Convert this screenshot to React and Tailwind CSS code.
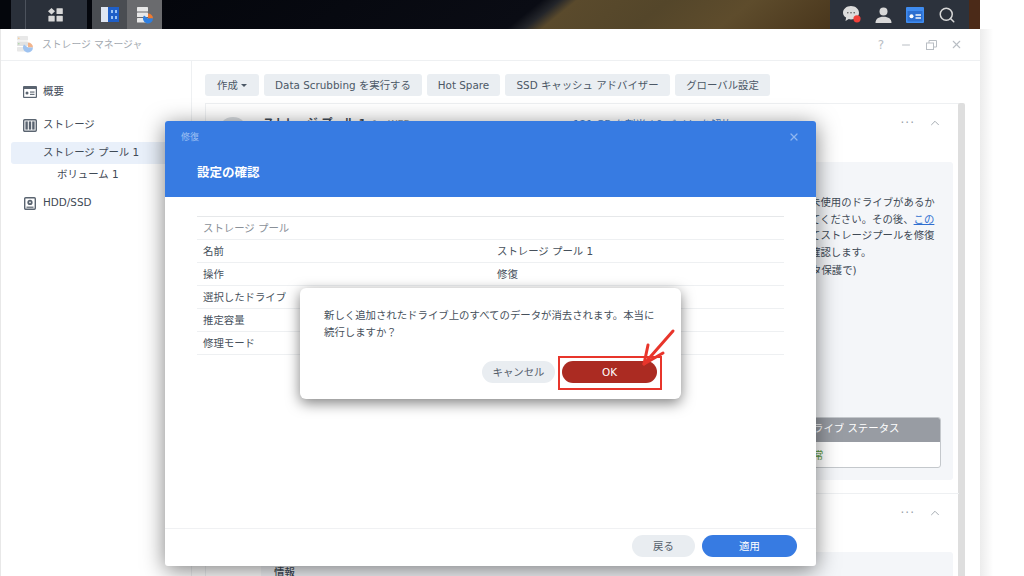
import React from 'react'
import { X, Minus, ChevronUp, Search } from 'lucide-react'

const FONT = { fontFamily: '"DejaVu Sans", "Noto Sans CJK JP", sans-serif' }

const CONFIRM_ROWS = [
  { label: 'ストレージ プール', value: '', head: true },
  { label: '名前', value: 'ストレージ プール 1' },
  { label: '操作', value: '修復' },
  { label: '選択したドライブ', value: '' },
  { label: '推定容量', value: '' },
  { label: '修理モード', value: '' },
]

function OverviewIcon() {
  return (
    <svg width="14" height="12" viewBox="0 0 14 12">
      <rect width="14" height="12" rx="1" fill="#5a6470" />
      <rect x="1.2" y="3" width="11.6" height="7.8" fill="#fff" />
      <circle cx="4" cy="7" r="1.5" fill="#5a6470" />
      <rect x="7" y="5.5" width="4.5" height="1.1" fill="#5a6470" />
      <rect x="7" y="7.8" width="4.5" height="1.1" fill="#5a6470" />
    </svg>
  )
}

function StorageIcon() {
  return (
    <svg width="14" height="13" viewBox="0 0 14 13">
      <rect x="0.7" y="0.7" width="12.6" height="11.6" rx="1" fill="#fff" stroke="#5a6470" strokeWidth="1.4" />
      <rect x="2.4" y="2.4" width="2.4" height="8.2" fill="#5a6470" />
      <rect x="5.8" y="2.4" width="2.4" height="8.2" fill="#5a6470" />
      <rect x="9.2" y="2.4" width="2.4" height="8.2" fill="#5a6470" />
    </svg>
  )
}

function HddIcon() {
  return (
    <svg width="12" height="13" viewBox="0 0 12 13">
      <rect x="0.7" y="0.7" width="10.6" height="11.6" rx="1" fill="#fff" stroke="#5a6470" strokeWidth="1.4" />
      <circle cx="6" cy="5.4" r="2.6" fill="#5a6470" />
      <circle cx="6" cy="5.4" r="0.8" fill="#fff" />
      <rect x="2.5" y="9.6" width="7" height="1.2" fill="#5a6470" />
    </svg>
  )
}

function StorageAppIcon() {
  return (
    <svg width="18" height="19" viewBox="0 0 18 19">
      <rect x="1" y="1" width="11" height="4.5" rx="0.8" fill="#e8e8e8" />
      <rect x="1" y="6.5" width="11" height="4.5" rx="0.8" fill="#e2e2e2" />
      <rect x="1" y="12" width="11" height="4.5" rx="0.8" fill="#e8e8e8" />
      <circle cx="2.8" cy="3.2" r="0.8" fill="#f5c890" />
      <circle cx="2.8" cy="8.7" r="0.8" fill="#a8d8a0" />
      <path d="M12 7.5a5 5 0 0 1 5 5h-5z" fill="#f2b48c" />
      <path d="M17 12.5a5 5 0 1 1-9-3l4 3z" fill="#9fc3f0" />
    </svg>
  )
}

function ToolbarButton({ className, children }) {
  return (
    <div className={`h-[22px] pt-[1px] flex items-center justify-center bg-[#eaeef2] rounded-[3px] text-[10.4px] text-[#4c5866] whitespace-nowrap ${className}`}>
      {children}
    </div>
  )
}

function SideItem({ icon, label }) {
  return (
    <div className="h-[22px] pl-[22px] flex items-center gap-[6px] text-[10.4px] text-[#3f4a56]">
      <span className="w-[14px] flex justify-center">{icon}</span>
      {label}
    </div>
  )
}

function TopBar() {
  return (
    <div className="h-[29px] flex bg-[#04060c] overflow-hidden">
      <div className="w-[76px] ml-[11px] bg-[#2a303a] flex items-center relative">
        <div className="w-[1px] h-full ml-[14px] bg-[#4c525c]" />
        <svg className="ml-[22px]" width="15" height="14" viewBox="0 0 15 14">
          <path d="M3.5 0 7 3.3 3.5 6.6 0 3.3z" fill="#d8d8d8" />
          <rect x="8.5" y="0.2" width="6.3" height="5.8" rx="0.6" fill="#d8d8d8" />
          <rect x="0.4" y="7.8" width="6.3" height="5.8" rx="0.6" fill="#d8d8d8" />
          <rect x="8.5" y="7.8" width="6.3" height="5.8" rx="0.6" fill="#d8d8d8" />
        </svg>
      </div>
      <div className="w-[5px]" />
      <div className="w-[35px] bg-[#4a4d52] flex items-center justify-center">
        <svg width="18" height="15" viewBox="0 0 18 15">
          <rect width="7" height="15" fill="#dfe6f2" />
          <rect x="7" width="11" height="15" fill="#1f5fc8" />
          <rect x="10" y="3" width="2" height="3" fill="#9cc4f5" />
          <rect x="14" y="3" width="2" height="3" fill="#9cc4f5" />
          <rect x="10" y="9" width="2" height="3" fill="#9cc4f5" />
          <rect x="14" y="9" width="2" height="3" fill="#9cc4f5" />
        </svg>
      </div>
      <div className="w-[35px] bg-[#6a6b6e] flex items-center justify-center">
        <svg width="18" height="18" viewBox="0 0 18 18">
          <rect x="1" y="1" width="11" height="4.5" rx="0.6" fill="#e8e8e8" />
          <rect x="1" y="6.5" width="11" height="4.5" rx="0.6" fill="#e8e8e8" />
          <rect x="1" y="12" width="11" height="4.5" rx="0.6" fill="#e8e8e8" />
          <path d="M12 7.5a5 5 0 0 1 5 5h-5z" fill="#ef7a30" />
          <path d="M17 12.5a5 5 0 1 1-9-3l4 3z" fill="#2f7fe0" />
        </svg>
      </div>
      <div className="flex-1 bg-[linear-gradient(141deg,#04060c_0%,#0a0c14_54%,#23252a_56.500%,#5a4a2c_59%,#54462a_72%,#5e4c2c_84%,#49361c_100%)]" />
      <div className="w-[139px] bg-[#2c323c] flex items-center pl-[13px]">
        <svg width="18" height="17" viewBox="0 0 18 17">
          <path d="M8 0c4.400 0 8 2.900 8 6.700s-3.600 6.700-8 6.700c-.8 0-1.500-.1-2.200-.3L2.500 15l.6-3.400C1.200 10.400 0 8.700 0 6.700 0 2.900 3.600 0 8 0z" fill="#dcdcdc" />
          <circle cx="4.800" cy="6.700" r="0.8" fill="#555" />
          <circle cx="8" cy="6.700" r="0.8" fill="#555" />
          <circle cx="11.200" cy="6.700" r="0.8" fill="#555" />
          <circle cx="14" cy="12.800" r="3.600" fill="#f0403a" />
        </svg>
        <svg className="ml-[14px]" width="17" height="16" viewBox="0 0 17 16">
          <circle cx="8.500" cy="4.500" r="4" fill="#d8d8d8" />
          <path d="M0.500 16c0-4 3-6.200 8-6.200s8 2.200 8 6.200z" fill="#d8d8d8" />
        </svg>
        <svg className="ml-[14px]" width="18" height="16" viewBox="0 0 18 16">
          <rect width="18" height="16" rx="1" fill="#3f8cf0" />
          <rect x="1.500" y="4" width="15" height="10.500" fill="#2c6fd0" />
          <circle cx="5.500" cy="9.300" r="2" fill="#fff" />
          <rect x="9.500" y="7.300" width="5.500" height="1.400" fill="#fff" />
          <rect x="9.500" y="10.300" width="5.500" height="1.400" fill="#fff" />
        </svg>
        <Search className="ml-[14px] text-[#d8d8d8]" size={18} strokeWidth={2} />
      </div>
      <div className="w-[11px] bg-[#4b2a18]" />
      <div className="w-[44px] bg-white" />
    </div>
  )
}

function WindowTitle() {
  return (
    <div className="h-[32px] pl-[15px] pr-[17px] flex items-center border-b border-[#eef0f2]">
      <StorageAppIcon />
      <span className="ml-[8px] pt-[1px] text-[9.8px] text-[#a3a9b0]">ストレージ マネージャ</span>
      <div className="ml-auto flex items-center text-[#b9bec4]">
        <span className="text-[12px] w-[14px] text-center">?</span>
        <Minus className="ml-[12px]" size={12} />
        <svg className="ml-[14px]" width="11" height="10" viewBox="0 0 11 10" fill="none" stroke="#b9bec4">
          <rect x="0.5" y="3" width="7" height="6.500" />
          <path d="M3 3V0.500h7.500V7H8" />
        </svg>
        <X className="ml-[13px]" size={13} />
      </div>
    </div>
  )
}

function Sidebar() {
  return (
    <div className="w-[191px] shrink-0 border-r border-[#eef0f2] pt-[20px]">
      <SideItem icon={<OverviewIcon />} label="概要" />
      <div className="h-[11px]" />
      <SideItem icon={<StorageIcon />} label="ストレージ" />
      <div className="mt-[6px] ml-[10px] h-[22px] w-[170px] rounded-[3px] bg-[#e9f0fa] pl-[32px] flex items-center text-[10.4px] text-[#3f4a56]">
        ストレージ プール 1
      </div>
      <div className="h-[22px] pl-[56px] flex items-center text-[10.4px] text-[#3f4a56]">ボリューム 1</div>
      <div className="h-[6px]" />
      <SideItem icon={<HddIcon />} label="HDD/SSD" />
    </div>
  )
}

function RowActions({ className }) {
  return (
    <div className={`absolute right-[17px] flex items-center gap-[13px] text-[#9aa1a8] ${className}`}>
      <span className="text-[12px] leading-none tracking-[1px]">···</span>
      <ChevronUp size={14} strokeWidth={1.5} />
    </div>
  )
}

function PoolHeader() {
  return (
    <div className="h-[58px] relative pl-[12px] pt-[13px] flex items-start">
      <div className="w-[30px] h-[30px] rounded-full bg-[#d8dce0] shrink-0" />
      <span className="ml-[15px] w-[109px] text-[11px] leading-[14px] font-bold text-[#3f4a56] whitespace-nowrap">ストレージ プール 1</span>
      <span className="w-[201px] text-[9.5px] leading-[14px] text-[#8a929a]">for WEB</span>
      <span className="text-[10.4px] leading-[14px] text-[#4a7fc8] whitespace-nowrap">121 GB を割当 / 0 バイト を解放</span>
      <RowActions className="top-[12px]" />
    </div>
  )
}

function PoolPanel() {
  return (
    <div className="flex-1 min-w-0 pl-[13px] pt-[13px] overflow-hidden">
      <div className="flex gap-[5px]">
        <ToolbarButton className="w-[54px]">
          作成
          <svg className="ml-[3px]" width="6" height="3" viewBox="0 0 6 3">
            <path d="M0 0h6L3 3z" fill="#4c5866" />
          </svg>
        </ToolbarButton>
        <ToolbarButton className="w-[158px]">Data Scrubbing を実行する</ToolbarButton>
        <ToolbarButton className="w-[73px]">Hot Spare</ToolbarButton>
        <ToolbarButton className="w-[165px]">SSD キャッシュ アドバイザー</ToolbarButton>
        <ToolbarButton className="w-[95px]">グローバル設定</ToolbarButton>
      </div>
      <div className="mt-[7px] flex h-[500px]">
        <div className="w-[754px] border-t border-l border-[#eef0f2]">
          <PoolHeader />
          <div className="ml-[55px] w-[692px] h-[318px] bg-[#f4f6f9] rounded-[3px] flex flex-col items-end pr-[12px]">
            <div className="w-[130px] mr-[1px] mt-[32px] text-[10.4px] leading-[16.7px] text-[#3f4a56] whitespace-nowrap">
              <div>未使用のドライブがあるか</div>
              <div>
                てください。その後、<span className="text-[#2f6fd0] underline">この</span>
              </div>
              <div>てストレージプールを修復</div>
              <div>確認します。</div>
              <div className="mt-[1px] ml-[1px]">タ保護で)</div>
            </div>
            <div className="mt-[138px] w-[130px] h-[51px] bg-white border border-[#c4c8cc] rounded-[3px] overflow-hidden">
              <div className="h-[25px] bg-[#989ca3] text-white text-[10.4px] flex items-center pl-[1px] -mt-[1px]">
                ライブ ステータス
              </div>
              <div className="text-[10.4px] text-[#5c9a3c] pt-[6px] pl-[1px]">常</div>
            </div>
          </div>
          <div className="mt-[13px] border-t border-[#eef0f2] relative h-[59px]">
            <RowActions className="top-[12px]" />
          </div>
          <div className="ml-[55px] w-[692px] h-[60px] bg-[#f4f6f9] rounded-[3px] pl-[13px] pt-[13px] text-[10.4px] font-medium text-[#3f4a56]">
            情報
          </div>
        </div>
        <div className="ml-[-1px] w-[7px] bg-[#dedede] rounded-t-[2px]" />
      </div>
    </div>
  )
}

function ConfirmDialog() {
  return (
    <div className="absolute left-[165px] top-[121px] w-[651px] h-[445px] bg-white rounded-[3px] shadow-[0_4px_22px_rgba(0,0,0,0.5)] flex flex-col overflow-hidden">
      <div className="h-[76px] bg-[#377be2] relative shrink-0">
        <div className="absolute left-[16px] top-[10px] text-[9px] text-[#9dc0f2]">修復</div>
        <X className="absolute right-[16px] top-[10px] text-[#8fb6f0]" size={12} strokeWidth={2.5} />
        <div className="absolute left-[32px] top-[42px] text-[12.5px] leading-[20px] font-bold text-white">設定の確認</div>
      </div>
      <div className="mt-[19px] ml-[32px] w-[587px] border-t border-[#e6e8ea]">
        {CONFIRM_ROWS.map(row => (
          <div key={row.label} className="h-[23px] pt-[1px] flex items-center border-b border-[#eef0f2] pl-[6px] text-[10.4px] text-[#46505b]">
            <span className={`w-[294px] ${row.head ? 'text-[#8a9098]' : ''}`}>{row.label}</span>
            <span>{row.value}</span>
          </div>
        ))}
      </div>
      <div className="mt-auto h-[38px] pb-[3px] border-t border-[#f0f1f3] flex items-center justify-end gap-[7px] pr-[19px] shrink-0">
        <div className="w-[63px] h-[22px] pt-[1px] rounded-full bg-[#e9edf1] flex items-center justify-center text-[10.4px] text-[#55606c]">戻る</div>
        <div className="w-[95px] h-[22px] pt-[1px] rounded-full bg-[#377be2] flex items-center justify-center text-[10.4px] text-white">適用</div>
      </div>
    </div>
  )
}

function EraseAlert() {
  return (
    <div className="absolute left-[300px] top-[288px] w-[381px] h-[111px] bg-white rounded-[6px] shadow-[0_4px_14px_rgba(0,0,0,0.5)]">
      <p className="pt-[19px] ml-[24px] w-[336px] text-[10.4px] leading-[16.5px] text-[#46505b]">
        新しく追加されたドライブ上のすべてのデータが消去されます。本当に続行しますか？
      </p>
      <div className="absolute left-[182px] top-[73px] flex items-center gap-[7px]">
        <div className="w-[73px] h-[22px] pt-[1px] rounded-full bg-[#e9edf1] flex items-center justify-center text-[10.4px] text-[#55606c]">キャンセル</div>
        <div className="w-[95px] h-[22px] pt-[1px] rounded-full bg-[#ab2b22] flex items-center justify-center text-[10.4px] font-medium text-white">OK</div>
      </div>
      {/* red annotation around the OK button */}
      <div className="absolute left-[258px] top-[68px] w-[104px] h-[34px] border-[2px] border-[#e8352b]" />
      <svg className="absolute left-[335px] top-[38px]" width="50" height="50" viewBox="0 0 50 50" fill="none" stroke="#e8352b" strokeWidth="3" strokeLinecap="round" strokeLinejoin="round">
        <path d="M38 5 9 38" />
        <path d="M13 19 9 38 28 27" />
      </svg>
    </div>
  )
}

export default function App() {
  return (
    <div className="relative w-[1024px] h-[576px] overflow-hidden bg-white" style={FONT}>
      <TopBar />
      <div className="flex h-[547px]">
        <div className="w-[1px] bg-[#e8e8e8]" />
        <div className="w-[979px] flex flex-col bg-white">
          <WindowTitle />
          <div className="flex flex-1 min-h-0">
            <Sidebar />
            <PoolPanel />
          </div>
        </div>
        <div className="w-[44px] bg-[linear-gradient(90deg,#ececec,#ffffff_30%)]" />
      </div>
      <ConfirmDialog />
      <EraseAlert />
    </div>
  )
}
